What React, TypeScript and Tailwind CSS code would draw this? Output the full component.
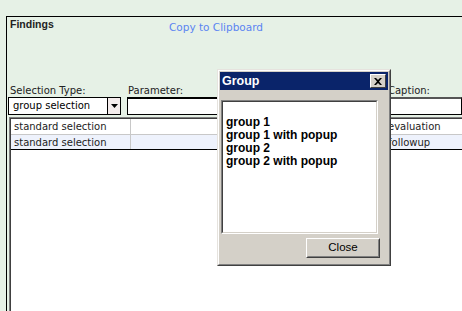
const ui = { fontFamily: '"DejaVu Sans", Verdana, sans-serif' };
const ms = { fontFamily: '"Liberation Sans", Arial, sans-serif' };

const groups = ["", "group 1", "group 1 with popup", "group 2", "group 2 with popup"];

const rows = [
  { type: "standard selection", param: "", caption: "evaluation", bg: "bg-white", line: "border-[#c8c8c8]", h: "h-[16px]" },
  { type: "standard selection", param: "", caption: "followup", bg: "bg-[#eef2fc]", line: "border-black", h: "h-[15px]" },
];

const GroupDialog = () => (
  <div className="absolute left-[217px] top-[69px] w-[174px] h-[197px] bg-[#d4d0c8] border border-t-[#e6e3de] border-l-[#e6e3de] border-r-[#404040] border-b-[#404040]">
    <div className="h-full border border-t-white border-l-white border-r-[#808080] border-b-[#808080] p-px flex flex-col">
      <div className="h-[18px] bg-[#0a246a] flex items-center justify-between pl-[2px] pr-[2px]">
        <span className="text-white font-bold text-[12.5px] leading-none" style={ms}>Group</span>
        <div className="w-[16px] h-[14px] bg-[#d4d0c8] border border-t-white border-l-white border-r-[#404040] border-b-[#404040] flex items-center justify-center">
          <svg width="8" height="7" viewBox="0 0 8 7">
            <path d="M0 0h2l2 2 2-2h2L5 3.5 8 7H6L4 5 2 7H0l3-3.5z" fill="#000" />
          </svg>
        </div>
      </div>
      <div className="mt-[10px] ml-[1px] w-[157px] h-[134px] border border-t-[#808080] border-l-[#808080] border-r-white border-b-white">
        <div className="h-full bg-white border border-t-[#404040] border-l-[#404040] border-r-[#d4d0c8] border-b-[#d4d0c8] pt-px pl-[3px]">
          {groups.map((g, i) => (
            <div key={i} className="h-[13px] leading-[13px] text-[12px] font-bold text-black whitespace-nowrap" style={ms}>
              {g}
            </div>
          ))}
        </div>
      </div>
      <div className="mt-[4px] ml-[86px] w-[74px] h-[20px] border border-t-white border-l-white border-r-[#404040] border-b-[#404040]">
        <div className="h-full border border-transparent border-r-[#808080] border-b-[#808080] flex items-center justify-center text-[11.5px] text-black" style={ms}>
          Close
        </div>
      </div>
    </div>
  </div>
);

export default function App() {
  return (
    <div className="relative w-[462px] h-[311px] overflow-hidden bg-[#e6f1e6]" style={ui}>
      <div className="mt-[16px] ml-[6px] h-[295px] border-t border-l border-black flex flex-col">
        <div className="h-[68px] flex items-start pt-px">
          <span className="ml-[3px] w-[159px] font-bold text-[10.5px] leading-[12px] text-[#222]" style={ms}>
            Findings
          </span>
          <span className="mt-[3px] text-[10.5px] leading-[12px] text-[#5b84f2]">Copy to Clipboard</span>
        </div>
        <div className="h-[12px] flex text-[10px] leading-[12px] text-[#222]">
          <span className="ml-[3px] w-[118px]">Selection Type:</span>
          <span className="w-[260px]">Parameter:</span>
          <span>Caption:</span>
        </div>
        <div className="h-[18px] flex">
          <div className="ml-[1px] w-[113px] flex border border-black bg-white">
            <span className="flex-1 pl-[4px] text-[10px] leading-[16px] text-black whitespace-nowrap">group selection</span>
            <div className="w-[13px] border-l border-black bg-[#f4ecec] flex items-center justify-center">
              <svg width="7" height="4" viewBox="0 0 7 4">
                <path d="M0 0h7L3.5 4z" fill="#000" />
              </svg>
            </div>
          </div>
          <div className="ml-[6px] w-[255px] border border-black border-t-2 bg-white" />
          <div className="ml-[5px] flex-1 border border-black border-t-2 border-t-[#555] bg-white" />
        </div>
        <div className="mt-[2px] ml-[2px] flex-1 border-t border-l border-[#808080]">
          <div className="h-full border-t border-l border-[#404040] bg-white">
            {rows.map((r, i) => (
              <div key={i} className={`flex ${r.h} border-b ${r.line} ${r.bg} text-[10px] leading-[16px] text-[#222] whitespace-nowrap`}>
                <div className="w-[120px] pl-[3px] border-r border-[#c8c8c8]">{r.type}</div>
                <div className="w-[254px]">{r.param}</div>
                <div className="pl-[3px]">{r.caption}</div>
              </div>
            ))}
          </div>
        </div>
      </div>
      <GroupDialog />
    </div>
  );
}
